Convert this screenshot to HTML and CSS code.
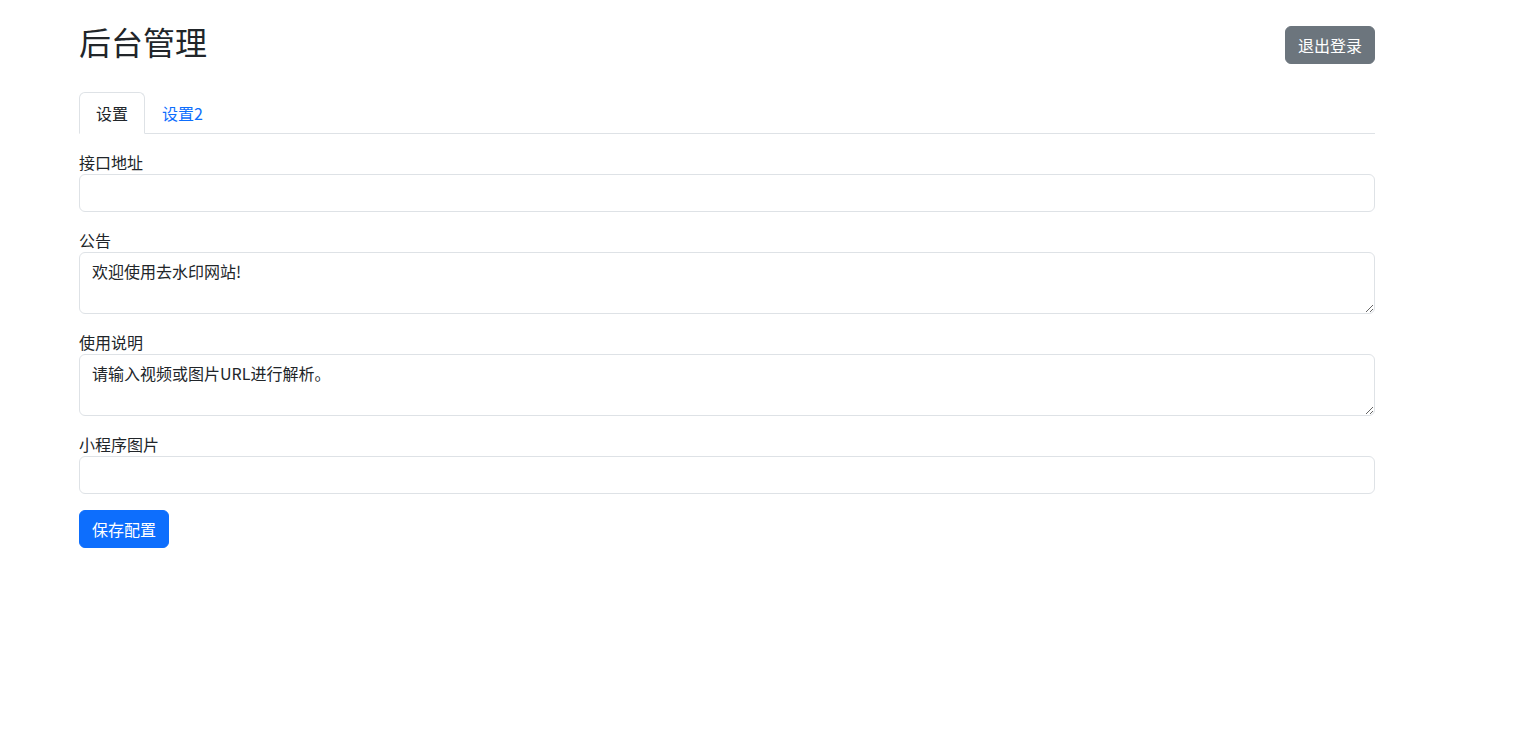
FILE: index.html
```html
<!DOCTYPE html>
<html>
<head>
<meta name="viewport" content="width=device-width, initial-scale=1">
<title>后台管理</title>
<link rel="stylesheet" href="styles.css">
</head>
<body>
<div class="container">
  <div class="header">
    <h2>后台管理</h2>
    <button class="btn btn-secondary">退出登录</button>
  </div>

  <ul class="nav-tabs">
    <li><a href="#set1" class="active">设置</a></li>
    <li><a href="#set2">设置2</a></li>
  </ul>

  <form class="tab-pane" id="set1">
    <div class="field">
      <label for="api">接口地址</label>
      <input type="text" id="api" class="form-control">
    </div>
    <div class="field">
      <label for="notice">公告</label>
      <textarea id="notice" class="form-control" rows="2">欢迎使用去水印网站!</textarea>
    </div>
    <div class="field">
      <label for="usage">使用说明</label>
      <textarea id="usage" class="form-control" rows="2">请输入视频或图片URL进行解析。</textarea>
    </div>
    <div class="field">
      <label for="pic">小程序图片</label>
      <input type="text" id="pic" class="form-control">
    </div>
    <button type="button" class="btn btn-primary">保存配置</button>
  </form>
</div>
</body>
</html>
```

FILE: styles.css
```css
* {
  box-sizing: border-box;
}

body {
  margin: 0;
  font-family: "Noto Sans CJK SC", "Noto Sans", "Liberation Sans", sans-serif;
  font-size: 16px;
  line-height: 1.5;
  color: #212529;
  background: #fff;
}

.container {
  width: 1296px;
  margin-left: 79px;
  padding-top: 22px;
}

.header {
  display: flex;
  justify-content: space-between;
  align-items: center;
  margin-bottom: 24px;
}

.header h2 {
  margin: 0 0 8px 0;
  font-size: 32px;
  font-weight: 400;
  line-height: 1.2;
}

.btn {
  display: inline-block;
  font-family: inherit;
  font-size: 16px;
  line-height: 1.5;
  padding: 6px 12px;
  border: 1px solid transparent;
  border-radius: 6px;
  color: #fff;
  cursor: pointer;
}

.btn-secondary {
  background-color: #6c757d;
  border-color: #6c757d;
}

.btn-primary {
  background-color: #0d6efd;
  border-color: #0d6efd;
}

.nav-tabs {
  display: flex;
  list-style: none;
  margin: 0;
  padding: 0;
  border-bottom: 1px solid #dee2e6;
}

.nav-tabs a {
  display: block;
  padding: 8px 16px;
  margin-bottom: -1px;
  color: #0d6efd;
  text-decoration: none;
  border: 1px solid transparent;
  border-top-left-radius: 6px;
  border-top-right-radius: 6px;
}

.nav-tabs a.active {
  color: #212529;
  background: #fff;
  border-color: #dee2e6 #dee2e6 #fff;
}

.tab-pane {
  padding-top: 16px;
}

.field {
  margin-bottom: 16px;
}

.field label {
  display: inline-block;
}

.form-control {
  display: block;
  width: 100%;
  padding: 6px 12px;
  font-family: inherit;
  font-size: 16px;
  line-height: 1.5;
  color: #212529;
  background: #fff;
  border: 1px solid #dee2e6;
  border-radius: 6px;
  margin: 0;
}

textarea.form-control {
  height: 62px;
  resize: vertical;
}
```
